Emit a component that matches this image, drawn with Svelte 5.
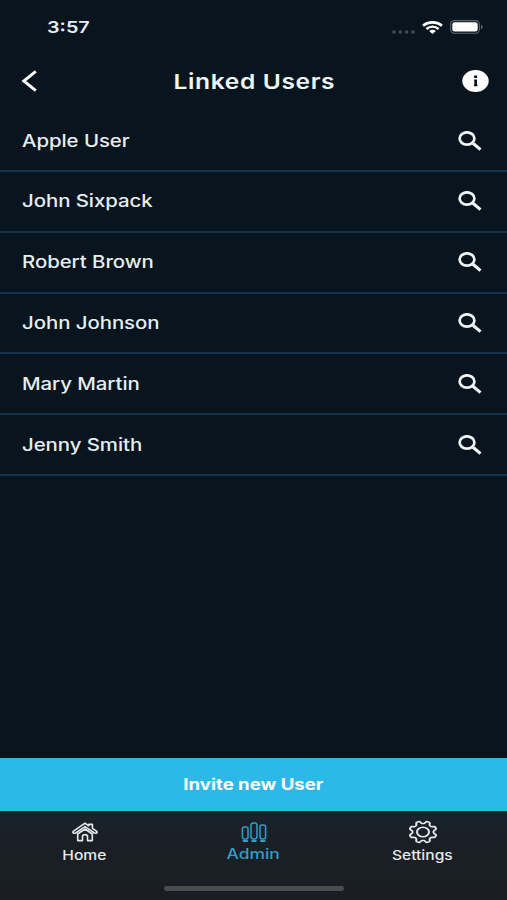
<script>
  const users = [
    'Apple User',
    'John Sixpack',
    'Robert Brown',
    'John Johnson',
    'Mary Martin',
    'Jenny Smith'
  ];

  let activeTab = 'Admin';
  const tabs = ['Home', 'Admin', 'Settings'];

  // Outline of an eight-toothed cog with rounded teeth
  function cogPath(cx, cy, radius, depth) {
    const points = [];
    for (let i = 0; i < 128; i++) {
      const angle = (i / 128) * Math.PI * 2;
      const wave = Math.tanh(-2 * Math.cos(angle * 8));
      const r = radius + depth * wave;
      points.push(`${(cx + r * Math.cos(angle)).toFixed(2)} ${(cy + r * Math.sin(angle)).toFixed(2)}`);
    }
    return `M${points.join('L')}Z`;
  }

  const cog = cogPath(12, 12, 9.7, 1.3);
</script>

<div class="screen">
  <div class="status-bar">
    <span class="time"><span class="wide">3:57</span></span>
    <div class="status-icons">
      <svg class="signal" viewBox="0 0 23 4">
        <circle cx="2" cy="2" r="1.8" />
        <circle cx="8.3" cy="2" r="1.8" />
        <circle cx="14.6" cy="2" r="1.8" />
        <circle cx="20.9" cy="2" r="1.8" />
      </svg>
      <svg class="wifi" viewBox="0 0 21 13" fill="none" stroke="#fff">
        <path d="M1 4.6C6.3 .2 14.7 .2 20 4.6" stroke-width="2.7" />
        <path d="M4.4 8C8 5 13 5 16.6 8" stroke-width="2.6" />
        <path d="M7.1 10.1Q10.5 7.6 13.9 10.1L10.5 13Z" fill="#fff" stroke="none" />
      </svg>
      <svg class="battery" viewBox="0 0 33 14">
        <rect x=".6" y=".6" width="28.8" height="12.6" rx="3.6" fill="none" stroke="#5d646a" stroke-width="1.1" />
        <rect x="2.3" y="2.2" width="25.4" height="9.4" rx="2.3" fill="#fff" />
        <path d="M31 4.8Q32.8 5.4 32.8 7T31 9.2Z" fill="#5d646a" />
      </svg>
    </div>
  </div>

  <header class="header">
    <button class="icon-button" aria-label="Back">
      <svg class="back" viewBox="0 0 16 22" fill="none" stroke="#fff" stroke-width="2.9">
        <path d="M14.8 1.4L2.8 11L14.8 20.6" />
      </svg>
    </button>
    <h1><span class="wide">Linked Users</span></h1>
    <button class="icon-button info-button" aria-label="Information">
      <svg class="info" viewBox="0 0 27 22">
        <ellipse cx="13.5" cy="11" rx="13.2" ry="11" fill="#fff" />
        <path d="M12.1 5.6h2.9v2.3h-2.9ZM11.9 9.4h3.1v5.4h.5v1.4h-3.6v-1.4h.4v-4h-.4Z" fill="#09151e" />
      </svg>
    </button>
  </header>

  <ul class="user-list">
    {#each users as user}
      <li class="user-row">
        <span class="wide">{user}</span>
        <svg class="search" viewBox="0 0 24 20" fill="none" stroke="#eef4f7">
          <ellipse cx="9" cy="7.5" rx="7.4" ry="6.2" stroke-width="2.7" />
          <path d="M14.7 12L22.5 18.6" stroke-width="3.2" />
        </svg>
      </li>
    {/each}
  </ul>

  <button class="invite"><span class="wide">Invite new User</span></button>

  <nav class="tab-bar">
    {#each tabs as tab}
      <button class="tab" class:active={tab === activeTab} on:click={() => (activeTab = tab)}>
        {#if tab === 'Home'}
          <svg class="home-icon" viewBox="0 0 26 20" fill="none" stroke="currentColor" stroke-width="1.6" stroke-linejoin="round">
            <path d="M13 1.2L1.2 9.4Q.3 11 2.2 11.3L3.6 11L13 4.6L22.4 11L23.8 11.3Q25.7 11 24.8 9.4L20.4 6.3V2.4H16.8V3.8Z" />
            <path d="M5.7 12L13 7L20.3 12V18.6H15.5V13.8Q15.2 12.6 13 12.6T10.5 13.8V18.6H5.7Z" />
          </svg>
        {:else if tab === 'Admin'}
          <svg class="admin-icon" viewBox="0 0 26 21" fill="none" stroke="currentColor" stroke-width="1.5">
            <rect x="1.4" y="5" width="5.6" height="12" rx="2" />
            <rect x="10" y=".9" width="6" height="16.1" rx="2.4" />
            <rect x="19" y="3" width="5.6" height="14" rx="2" />
            <path d="M2.5 18.9h3.6M11.2 18.9h3.6M20 18.9h3.6" stroke-width="2" stroke-linecap="round" />
          </svg>
        {:else}
          <svg class="settings-icon" viewBox="0 0 24 24" preserveAspectRatio="none" fill="none" stroke="currentColor" stroke-width="1.6">
            <path d={cog} />
            <circle cx="12" cy="12" r="4.8" />
          </svg>
        {/if}
        <span class="wide">{tab}</span>
      </button>
    {/each}
    <div class="home-indicator"></div>
  </nav>
</div>

<style>
  :global(body) {
    margin: 0;
    background: #09151e;
  }

  .screen {
    display: flex;
    flex-direction: column;
    width: 507px;
    height: 900px;
    overflow: hidden;
    background: #09151e;
    color: #e6eef3;
    font-family: Inter, 'Liberation Sans', sans-serif;
  }

  button {
    margin: 0;
    padding: 0;
    border: none;
    background: none;
    color: inherit;
    font: inherit;
    cursor: pointer;
  }

  svg {
    display: block;
  }

  .wide {
    display: inline-block;
    transform: scaleX(1.2);
    white-space: nowrap;
  }

  .status-bar {
    display: flex;
    justify-content: space-between;
    align-items: center;
    box-sizing: border-box;
    height: 54px;
    padding: 0 24px 0 47px;
  }

  .time {
    font-size: 16.5px;
    font-weight: 600;
  }

  .time .wide {
    transform-origin: left;
  }

  .status-icons {
    display: flex;
    align-items: center;
    gap: 7px;
  }

  .signal {
    width: 23px;
    height: 4px;
    margin-top: 9px;
    fill: #444d54;
  }

  .wifi {
    width: 21px;
    height: 13px;
  }

  .battery {
    width: 33px;
    height: 14px;
  }

  .header {
    display: grid;
    grid-template-columns: 1fr auto 1fr;
    align-items: center;
    box-sizing: border-box;
    height: 56px;
    padding: 0 18px 2px 21px;
  }

  .header h1 {
    margin: 0;
    padding-right: 2px;
    font-size: 20.5px;
    font-weight: 600;
    letter-spacing: 0.5px;
    color: #f0f5f8;
  }

  .info-button {
    justify-self: end;
  }

  .back {
    width: 16px;
    height: 22px;
  }

  .info {
    width: 27px;
    height: 22px;
  }

  .user-list {
    flex: 1;
    margin: 0;
    padding: 1.2px 0 0;
    list-style: none;
  }

  .user-row {
    display: flex;
    justify-content: space-between;
    align-items: center;
    box-sizing: border-box;
    height: 60.8px;
    padding: 0 25px 0 22px;
    border-bottom: 2px solid #12344a;
    font-size: 17px;
    font-weight: 500;
    letter-spacing: -0.05px;
  }

  .user-row .wide {
    transform-origin: left;
  }

  .search {
    width: 24px;
    height: 20px;
  }

  .invite {
    height: 53px;
    background: #2bbae7;
    color: #fff;
    font-size: 15.5px;
    font-weight: 700;
  }

  .tab-bar {
    display: grid;
    grid-template-columns: repeat(3, 1fr);
    grid-template-rows: 75px 5px;
    height: 89px;
    background: linear-gradient(#18242c, #1a1f26 35%, #1a1d24);
  }

  .tab {
    display: flex;
    flex-direction: column;
    align-items: center;
    justify-content: flex-start;
    padding-top: 9px;
    font-size: 13px;
    font-weight: 500;
    line-height: 16px;
    color: #e6e9ec;
  }

  .tab .wide {
    margin-top: 4px;
  }

  .tab.active {
    font-size: 14.5px;
    color: #2e9fc8;
  }

  .tab.active .wide {
    margin-top: 3px;
  }

  .home-icon {
    width: 26px;
    height: 20px;
    margin: 2px 0 1px;
  }

  .admin-icon {
    width: 26px;
    height: 21px;
    margin: 2px 0 0;
  }

  .settings-icon {
    width: 30px;
    height: 24px;
    margin-bottom: -1px;
  }

  .home-indicator {
    grid-column: 1 / -1;
    justify-self: center;
    width: 180px;
    height: 5px;
    border-radius: 3px;
    background: #4a4c50;
  }
</style>
